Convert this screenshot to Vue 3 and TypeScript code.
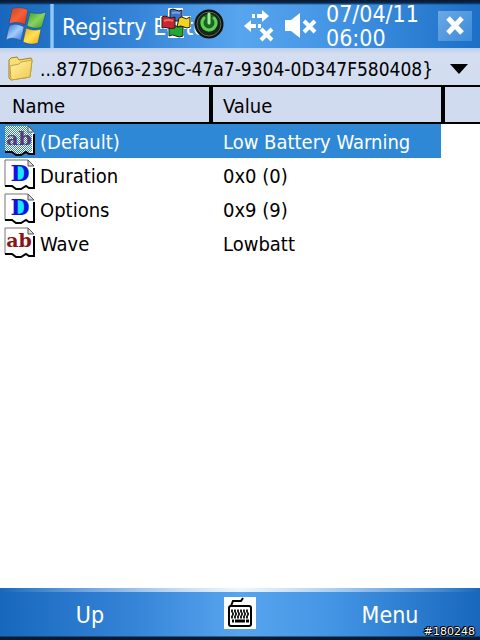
<script setup lang="ts">
import { ref } from 'vue'

interface Entry {
  name: string
  kind: 'string' | 'dword'
  value: string
}

const entries: Entry[] = [
  { name: '(Default)', kind: 'string', value: 'Low Battery Warning' },
  { name: 'Duration', kind: 'dword', value: '0x0 (0)' },
  { name: 'Options', kind: 'dword', value: '0x9 (9)' },
  { name: 'Wave', kind: 'string', value: 'Lowbatt' },
]

const selected = ref(0)
</script>

<template>
  <div class="screen">
    <header class="titlebar">
      <button class="start" type="button" aria-label="Start">
        <svg width="40" height="40" viewBox="0 0 40 40">
          <defs>
            <linearGradient id="flagRed" x1="0" y1="0" x2="1" y2="1"><stop offset="0" stop-color="#c9401c" /><stop offset=".5" stop-color="#f4623a" /><stop offset="1" stop-color="#d8330f" /></linearGradient>
            <linearGradient id="flagGreen" x1="0" y1="0" x2="1" y2="1"><stop offset="0" stop-color="#2f9a2c" /><stop offset=".5" stop-color="#8ad35e" /><stop offset="1" stop-color="#3a9d26" /></linearGradient>
            <linearGradient id="flagBlue" x1="0" y1="0" x2="1" y2="1"><stop offset="0" stop-color="#2a6ad0" /><stop offset=".5" stop-color="#a4cdfa" /><stop offset="1" stop-color="#2d6bd2" /></linearGradient>
            <linearGradient id="flagYellow" x1="0" y1="0" x2="1" y2="1"><stop offset="0" stop-color="#e9a913" /><stop offset=".5" stop-color="#ffe254" /><stop offset="1" stop-color="#eaa50f" /></linearGradient>
          </defs>
          <g stroke="#0b3f86" stroke-opacity=".45" stroke-width="1">
            <path fill="url(#flagRed)" d="M6 3C10 1 16 1 22 4L19 19C14 16 8 16 3 18Z" />
            <path fill="url(#flagGreen)" d="M24 6C29 8 34 8 40 6L36 21C31 23 26 22 21 20Z" />
            <path fill="url(#flagBlue)" d="M3 20C8 17 13 18 18 21L15 35C10 32 5 31 0 34Z" />
            <path fill="url(#flagYellow)" d="M20 22C25 24 30 25 35 23L32 37C27 39 22 38 17 36Z" />
          </g>
        </svg>
      </button>
      <span class="divider"></span>
      <h1 class="title">Registry Editor</h1>
      <div class="tray">
        <svg width="32" height="32" viewBox="0 0 32 32">
          <path d="M9 1H22V9H30V20H23V29H9V20H1V9H9Z" fill="#fff" stroke="#fff" stroke-width="2" stroke-linejoin="round" />
          <g stroke="#14201c" stroke-width="1">
            <path fill="#3b6fc8" d="M10 2Q13 0 16 2T22 2V13H10Z" />
            <path fill="#22a832" d="M9 18Q13 16 16 18T23 18V28Q19 30 16 28T9 28Z" />
            <path fill="#cf2430" d="M2 9Q5 7 8 9T15 9V20Q11 21 8 20T2 20Z" />
            <path fill="#f3d51e" d="M19 10Q22 8 24 10T30 9V19Q27 21 24 19T17 19Z" />
          </g>
          <path d="M4 13q4-2 9 0M12 5q4-1 8 0" fill="none" stroke="#fff" stroke-opacity=".35" stroke-width="2" />
        </svg>
        <svg width="30" height="32" viewBox="0 0 30 32">
          <circle cx="15" cy="16" r="13" fill="#18251a" stroke="#0b120b" stroke-width="3" />
          <circle cx="15" cy="16" r="12" fill="none" stroke="#606a60" stroke-width="1" />
          <circle cx="15" cy="15" r="9" fill="#1c6426" />
          <path d="M10 10a7 7 0 1 0 10 0" fill="none" stroke="#5cd052" stroke-width="3" stroke-linecap="round" />
          <path d="M15 6v9" stroke="#9bf28a" stroke-width="3" stroke-linecap="round" />
        </svg>
      </div>
      <button class="status signal" type="button" aria-label="Connectivity">
        <svg width="30" height="32" viewBox="0 0 30 32" fill="#fff">
          <path d="M13 4h5V0l7 6-7 6V8h-5zM8 4h3v4H8zM12 18H7v4L0 16l7-6v4h5zM14 14h3v4h-3z" />
          <path d="M17 19l11 11M28 19L17 30" stroke="#fff" stroke-width="4" />
        </svg>
      </button>
      <button class="status" type="button" aria-label="Volume">
        <svg width="34" height="28" viewBox="0 0 34 28" fill="#fff">
          <path d="M1 8h6l9-7v25l-9-7H1z" />
          <path d="M20 9l11 11M31 9L20 20" stroke="#fff" stroke-width="4" />
        </svg>
      </button>
      <div class="clock"><span>07/04/11</span><span>06:00</span></div>
      <button class="close" type="button" aria-label="Close">
        <svg width="20" height="20" viewBox="0 0 20 20"><path d="M3 2l14 15M17 2L3 17" stroke="#fff" stroke-width="5" /></svg>
      </button>
    </header>

    <button class="path" type="button">
      <svg width="26" height="26" viewBox="0 0 26 26">
        <defs><linearGradient id="folderFill" x1="0" y1="0" x2="1" y2="1"><stop offset="0" stop-color="#fff3a8" /><stop offset="1" stop-color="#efc94a" /></linearGradient></defs>
        <path d="M1 4L3 2 9 1 11 4 23 2 24 4 22 21 3 24 1 22Z" fill="#f8df79" stroke="#a57d22" stroke-width="1" />
        <path d="M2 10L11 8 13 6 24 4 22 21 3 24Z" fill="url(#folderFill)" stroke="#c9a23c" stroke-width="1" />
      </svg>
      <span class="path-text">...877D663-239C-47a7-9304-0D347F580408}</span>
      <svg class="arrow" width="18" height="10" viewBox="0 0 18 10"><path d="M0 0h18L9 10z" /></svg>
    </button>

    <main class="list">
      <table>
        <colgroup><col class="c-name" /><col class="c-value" /><col /></colgroup>
        <thead>
          <tr><th scope="col">Name</th><th scope="col">Value</th><td></td></tr>
        </thead>
        <tbody>
          <tr v-for="(entry, i) in entries" :key="entry.name" :class="{ selected: i === selected }" @click="selected = i">
            <td>
              <div class="cell">
                <svg width="32" height="32" viewBox="0 0 32 32">
                  <defs>
                    <pattern id="dither" width="2" height="2" patternUnits="userSpaceOnUse"><path d="M0 0h1v1H0zM1 1h1v1H1z" fill="#2f88d5" /></pattern>
                  </defs>
                  <path d="M1 1H24L30 7V29H25L21 27 17 30H12L8 27H1Z" fill="#fff" />
                  <path v-if="i === selected" d="M1 1H24L28 7V27L17 29H12L8 26H1Z" fill="url(#dither)" />
                  <path d="M1 27V1H24" fill="none" stroke="#777" stroke-width="1" :stroke-opacity="i === selected ? 0 : 1" />
                  <path d="M24 1V7H30Z" fill="#ddd" stroke="#555" stroke-width="1" />
                  <path d="M30 9V29H25L22 27 17 30H12L8 27H1" fill="none" stroke="#000" stroke-width="2" />
                  <template v-if="entry.kind === 'dword'">
                    <path d="M11 7h7l5 4v7l-5 3h-7z" fill="#1ce6fa" />
                    <text class="glyph-d" x="16" y="22" text-anchor="middle">D</text>
                  </template>
                  <text v-else class="glyph-ab" x="15" y="20" text-anchor="middle">ab</text>
                </svg>
                <span>{{ entry.name }}</span>
              </div>
            </td>
            <td class="value">{{ entry.value }}</td>
            <td class="rest"></td>
          </tr>
        </tbody>
      </table>
    </main>

    <footer class="softkeys">
      <button type="button" class="soft">Up</button>
      <button type="button" class="sip" aria-label="Keyboard">
        <svg width="32" height="32" viewBox="0 0 32 32">
          <path d="M0 0h32v32H0z" fill="#fff" />
          <path d="M7 9L9 4H17L19 1" fill="none" stroke="#000" stroke-width="2" />
          <rect x="5" y="9" width="22" height="20" rx="2" fill="#fff" stroke="#000" stroke-width="2" />
          <path d="M7 14h18M8 17h17M7 20h18" stroke="#222" stroke-width="3" stroke-dasharray="2 1" />
          <path d="M8 24h2M11 24h10M22 24h3" stroke="#000" stroke-width="3" />
        </svg>
      </button>
      <button type="button" class="soft">Menu</button>
      <span class="tag">#180248</span>
    </footer>
  </div>
</template>

<style>
body { margin: 0; }
</style>

<style scoped>
.screen {
  display: flex;
  flex-direction: column;
  min-height: 100vh;
  background: #fff;
  color: #000;
  font-family: "DejaVu Sans Condensed", "Noto Sans", sans-serif;
  font-size: 20px;
}
button {
  margin: 0;
  padding: 0;
  border: 0;
  background: none;
  color: inherit;
  font: inherit;
}
svg { display: block; flex: none; }
.titlebar {
  position: relative;
  display: flex;
  align-items: center;
  box-sizing: border-box;
  height: 48px;
  padding: 4px 8px 0 6px;
  background:
    linear-gradient(#08182c, #0a2a50 3px, transparent 5px),
    linear-gradient(90deg, #1768bd, #3684d8 28%, #58a5ee 50%, #4596e5 68%, #1c6fc6);
  color: #fff;
}
.divider {
  width: 4px;
  height: 44px;
  margin: 0 8px 0 4px;
  background: linear-gradient(90deg, #5ba4e8, #a8d2f8, #5ba4e8);
}
.title {
  flex: 1;
  min-width: 0;
  margin: 0;
  padding-top: 2px;
  font-size: 23px;
  font-weight: 400;
  line-height: 28px;
  white-space: nowrap;
}
.tray {
  position: absolute;
  top: 8px;
  left: 160px;
  display: flex;
  gap: 2px;
}
.status { margin-right: 8px; }
.signal { margin-right: 10px; }
.clock {
  display: flex;
  flex-direction: column;
  width: 112px;
  font-size: 23px;
  line-height: 24px;
}
.close {
  display: flex;
  align-items: center;
  justify-content: center;
  width: 34px;
  height: 30px;
  background: linear-gradient(135deg, #6ba9e4, #3c8bd9);
}
.path {
  display: flex;
  align-items: center;
  box-sizing: border-box;
  height: 39px;
  padding: 4px 12px 0 8px;
  border-bottom: 2px solid #000;
  background: linear-gradient(#b9d0ee, #d4def0 6px, #d2ddef);
  text-align: left;
}
.path-text {
  flex: 1;
  min-width: 0;
  margin-left: 6px;
  font-size: 19px;
  white-space: nowrap;
}
.arrow { margin-left: 8px; }
.list { flex: 1; }
table {
  width: 100%;
  border-collapse: separate;
  border-spacing: 0;
  table-layout: fixed;
}
.c-name { width: 213px; }
.c-value { width: 232px; }
thead th,
thead td {
  box-sizing: border-box;
  height: 37px;
  padding: 2px 0 0 12px;
  border-bottom: 2px solid #000;
  background: #d0dbef;
  font-weight: 400;
  text-align: left;
}
thead th { border-right: 4px solid #000; }
thead th + th { padding-left: 10px; }
tbody td { height: 34px; padding: 0; }
tbody .value { padding-left: 10px; padding-top: 2px; box-sizing: border-box; }
.cell {
  display: flex;
  align-items: center;
  gap: 4px;
  padding-left: 4px;
}
.cell span { padding-top: 2px; }
.selected { color: #fff; }
.selected td { background: #2f88d5; }
.selected .value {
  background: linear-gradient(90deg, #2f88d5 228px, #fff 228px);
}
.selected .rest { background: #fff; }
.glyph-d {
  font: 700 22px "DejaVu Serif", serif;
  fill: #0d14e0;
}
.glyph-ab {
  font: 700 19px "DejaVu Serif", serif;
  fill: #8a1414;
}
.selected .glyph-ab { fill: #573b78; }
.softkeys {
  position: relative;
  display: grid;
  grid-template-columns: 1fr 60px 1fr;
  align-items: center;
  box-sizing: border-box;
  height: 52px;
  padding-bottom: 2px;
  background:
    linear-gradient(transparent 48px, #0a1a30 49px),
    linear-gradient(90deg, transparent, rgba(255, 255, 255, 0.9) 50%, transparent) 0 0 / 100% 4px no-repeat,
    linear-gradient(90deg, #1768bd, #3684d8 28%, #58a5ee 50%, #4596e5 68%, #1768bd);
  color: #fff;
}
.soft {
  height: 44px;
  padding-top: 4px;
  font-size: 23px;
}
.soft:first-child { padding-right: 30px; }
.soft:nth-child(3) { padding-left: 30px; }
.sip { justify-self: center; }
.tag {
  position: absolute;
  right: 5px;
  bottom: 1px;
  font-family: "DejaVu Sans", sans-serif;
  font-size: 11px;
  line-height: 14px;
  text-shadow: 1px 0 #000, -1px 0 #000, 0 1px #000, 0 -1px #000, 1px 1px #000, -1px -1px #000;
}
</style>
